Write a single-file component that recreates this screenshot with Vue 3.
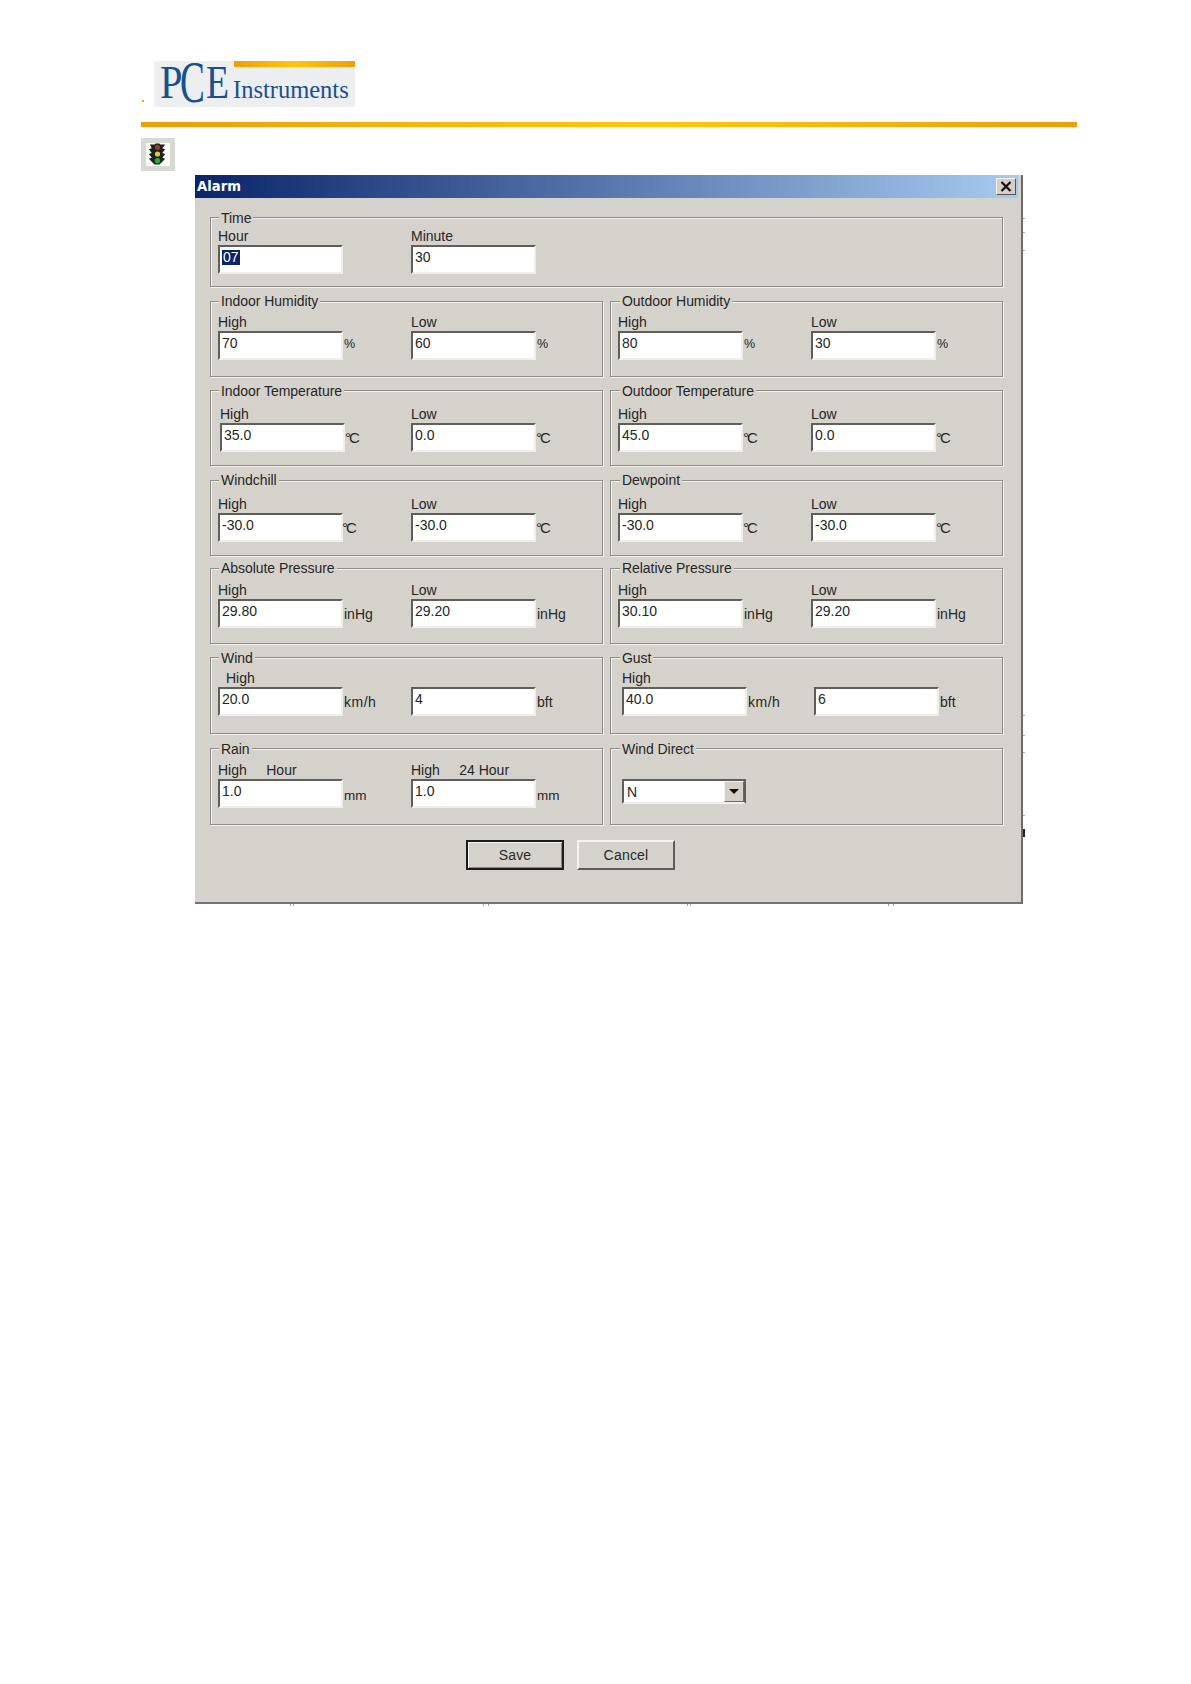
<script setup>
const rows = [
  { cls: 'r0', groups: [
    { title: 'Time', cls: 'wide', fields: [
      { label: 'Hour', value: '07', selected: true },
      { label: 'Minute', value: '30' }
    ] }
  ] },
  { cls: 'r1', groups: [
    { title: 'Indoor Humidity', fields: [
      { label: 'High', value: '70', unit: '%', unitCls: 'pct' },
      { label: 'Low', value: '60', unit: '%', unitCls: 'pct' }
    ] },
    { title: 'Outdoor Humidity', fields: [
      { label: 'High', value: '80', unit: '%', unitCls: 'pct' },
      { label: 'Low', value: '30', unit: '%', unitCls: 'pct' }
    ] }
  ] },
  { cls: 'r2', groups: [
    { title: 'Indoor Temperature', cls: 'inset2', fields: [
      { label: 'High', value: '35.0', unit: '°C', unitCls: 'deg' },
      { label: 'Low', value: '0.0', unit: '°C', unitCls: 'deg' }
    ] },
    { title: 'Outdoor Temperature', fields: [
      { label: 'High', value: '45.0', unit: '°C', unitCls: 'deg' },
      { label: 'Low', value: '0.0', unit: '°C', unitCls: 'deg' }
    ] }
  ] },
  { cls: 'r3', groups: [
    { title: 'Windchill', fields: [
      { label: 'High', value: '-30.0', unit: '°C', unitCls: 'deg tight' },
      { label: 'Low', value: '-30.0', unit: '°C', unitCls: 'deg' }
    ] },
    { title: 'Dewpoint', fields: [
      { label: 'High', value: '-30.0', unit: '°C', unitCls: 'deg' },
      { label: 'Low', value: '-30.0', unit: '°C', unitCls: 'deg' }
    ] }
  ] },
  { cls: 'r4', groups: [
    { title: 'Absolute Pressure', fields: [
      { label: 'High', value: '29.80', unit: 'inHg' },
      { label: 'Low', value: '29.20', unit: 'inHg' }
    ] },
    { title: 'Relative Pressure', fields: [
      { label: 'High', value: '30.10', unit: 'inHg' },
      { label: 'Low', value: '29.20', unit: 'inHg' }
    ] }
  ] },
  { cls: 'r5', groups: [
    { title: 'Wind', fields: [
      { label: 'High', labelCls: 'indent', value: '20.0', unit: 'km/h', unitCls: 'wide-unit' },
      { label: '', value: '4', unit: 'bft' }
    ] },
    { title: 'Gust', cls: 'inset4', fields: [
      { label: 'High', value: '40.0', unit: 'km/h', unitCls: 'wide-unit' },
      { label: '', value: '6', unit: 'bft' }
    ] }
  ] },
  { cls: 'r6', groups: [
    { title: 'Rain', fields: [
      { label: 'High     Hour', value: '1.0', unit: 'mm', unitCls: 'low' },
      { label: 'High     24 Hour', value: '1.0', unit: 'mm', unitCls: 'low' }
    ] },
    { title: 'Wind Direct', cls: 'inset4', fields: [
      { label: '', value: 'N', select: true }
    ] }
  ] }
]

// Scan artefacts: hairline ticks just outside the dialog frame
const bottomTicks = [95, 98, 288, 293, 492, 495, 693, 698]
const sideTicks = [43, 57, 75, 540, 560, 577, 640]
</script>

<template>
  <div class="page">
    <div class="logo">
      <span class="logo-stripe"></span>
      <span class="logo-p">P</span><span class="logo-c">C</span><span class="logo-e">E</span><span class="logo-name">Instruments</span>
    </div>
    <span class="speck"></span>
    <div class="rule"></div>

    <div class="tool-icon">
      <svg width="24" height="25" viewBox="0 0 24 25">
        <path d="M4 2h5l1-1h4l1 1h5l-3 4 3 1-3 4 3 1-3 4 3 1-4 4-2 2H9l-2-2-4-4 3-1-3-4 3-1-3-4 3-1z" fill="#1d231c" />
        <circle cx="12" cy="5" r="2.7" fill="#a8352c" />
        <circle cx="12" cy="12" r="2.7" fill="#d8d23c" />
        <circle cx="12" cy="19" r="2.8" fill="#2fa845" />
      </svg>
    </div>

    <div class="dialog">
      <div class="titlebar">
        <span class="title">Alarm</span>
        <button class="close" type="button" aria-label="Close">
          <svg width="12" height="11" viewBox="0 0 12 11">
            <path d="M1.5 1 L10.5 10 M10.5 1 L1.5 10" stroke="#111" stroke-width="2.2" fill="none" />
          </svg>
        </button>
      </div>

      <div class="body">
        <div v-for="row in rows" :key="row.cls" class="row" :class="row.cls">
          <section v-for="g in row.groups" :key="g.title" class="group" :class="g.cls">
            <span class="legend">{{ g.title }}</span>
            <div v-for="(f, i) in g.fields" :key="i" class="field">
              <span class="label" :class="f.labelCls">{{ f.label }}</span>
              <div class="line">
                <div v-if="f.select" class="select">
                  <span class="select-value">{{ f.value }}</span>
                  <span class="select-btn"><span class="arrow"></span></span>
                </div>
                <div v-else class="box">
                  <span :class="{ selected: f.selected }">{{ f.value }}</span>
                </div>
                <span v-if="f.unit" class="unit" :class="f.unitCls">{{ f.unit }}</span>
              </div>
            </div>
          </section>
        </div>

        <div class="actions">
          <button class="btn default" type="button">Save</button>
          <button class="btn" type="button">Cancel</button>
        </div>
      </div>
      <span class="blot"></span>
      <span v-for="x in bottomTicks" :key="'b' + x" class="tick-b" :style="{ left: x + 'px' }"></span>
      <span v-for="y in sideTicks" :key="'s' + y" class="tick-s" :style="{ top: y + 'px' }"></span>
    </div>
  </div>
</template>

<style scoped>
.page {
  position: relative;
  width: 1191px;
  min-height: 1684px;
  padding-top: 61px;
  box-sizing: border-box;
  background: #fff;
  font-family: "Liberation Sans", Arial, sans-serif;
  font-size: 14px;
  color: #262626;
  overflow: hidden;
}

/* Logo */
.logo {
  position: relative;
  display: flex;
  align-items: baseline;
  width: 201px;
  height: 46px;
  margin-left: 154px;
  background: #eceef0;
  color: #17508f;
  font-family: "Liberation Serif", "Times New Roman", serif;
  line-height: 46px;
  box-sizing: border-box;
  padding-left: 6px;
}
.logo-stripe {
  position: absolute;
  top: 0;
  right: 0;
  width: 121px;
  height: 6px;
  background: linear-gradient(90deg, #ee9e0a, #fdc70c 50%, #ee9e0a);
}
.logo-p, .logo-c, .logo-e {
  display: inline-block;
  transform-origin: left bottom;
}
.logo-p {
  width: 20px;
  font-size: 46px;
  transform: translateY(-6px) scaleX(0.88);
}
.logo-c {
  width: 26px;
  font-size: 60px;
  transform: translateY(-2px) scaleX(0.62);
}
.logo-e {
  width: 27px;
  font-size: 46px;
  transform: translateY(-6px) scaleX(0.82);
}
.logo-name {
  font-size: 24.5px;
  transform: translateY(-6px);
}
.speck {
  position: absolute;
  left: 142px;
  top: 100px;
  width: 2px;
  height: 2px;
  background: #f2a900;
}
.rule {
  width: 936px;
  height: 5px;
  margin: 15px 0 0 141px;
  background: linear-gradient(90deg, #ee9d0c, #fdc90c 55%, #ee9d0c);
}

/* Toolbar icon */
.tool-icon {
  display: flex;
  align-items: center;
  justify-content: center;
  width: 34px;
  height: 33px;
  margin: 11px 0 0 141px;
  padding-right: 1px;
  box-sizing: border-box;
  border: 5px solid #d8d8d5;
  background: #fbfbf5;
}

/* Dialog */
.dialog {
  position: relative;
  width: 828px;
  height: 729px;
  margin: 4px 0 0 195px;
  box-sizing: border-box;
  background: #d5d2cc;
  border-right: 2px solid #6b6b69;
  border-bottom: 2px solid #737371;
}
.titlebar {
  display: flex;
  align-items: center;
  justify-content: space-between;
  height: 23px;
  margin-right: 3px;
  padding: 0 2px;
  background: linear-gradient(90deg, #0a246a, #a6caf0);
}
.title {
  font-family: "DejaVu Sans", Verdana, sans-serif;
  font-weight: 700;
  font-size: 13.2px;
  color: #fff;
}
.close {
  display: flex;
  align-items: center;
  justify-content: center;
  width: 20px;
  height: 17px;
  padding: 0;
  background: #d4d0c8;
  border: 1px solid;
  border-color: #f6f5f2 #55544f #55544f #f6f5f2;
}
.body {
  padding: 19px 0 0 15px;
}
.row {
  display: flex;
  gap: 7px;
}
.r0 { height: 70px; }
.r1 { height: 76px; margin-top: 14px; }
.r2 { height: 76px; margin-top: 13px; }
.r3 { height: 76px; margin-top: 14px; }
.r4 { height: 76px; margin-top: 12px; }
.r5 { height: 77px; margin-top: 13px; }
.r6 { height: 77px; margin-top: 14px; }

.group {
  position: relative;
  display: grid;
  grid-template-columns: 193px 1fr;
  align-content: start;
  width: 393px;
  box-sizing: border-box;
  padding-left: 7px;
  border: 1px solid #8e8d89;
  box-shadow: inset 1px 1px 0 #f1f0ec, 1px 1px 0 #f1f0ec;
}
.group.wide { width: 793px; }
.group.inset2 { padding-left: 9px; grid-template-columns: 191px 1fr; }
.group.inset4 { padding-left: 11px; grid-template-columns: 192px 1fr; }
.r0 .group { padding-top: 11px; }
.r1 .group { padding-top: 13px; }
.r2 .group { padding-top: 16px; }
.r3 .group { padding-top: 16px; }
.r4 .group { padding-top: 14px; }
.r5 .group { padding-top: 13px; }
.r6 .group { padding-top: 14px; }

.legend {
  position: absolute;
  top: -9px;
  left: 9px;
  padding: 0 2px;
  line-height: 16px;
  letter-spacing: -0.05px;
  background: #d5d2cc;
}
.group:first-child .legend {
  left: 8px;
}
.r0 .legend, .r2 .legend, .r5 .legend, .r6 .legend {
  top: -8px;
}
.field {
  min-width: 0;
}
.label {
  display: block;
  height: 16px;
  line-height: 14px;
  white-space: pre;
}
.label.indent { padding-left: 8px; }
.line {
  display: flex;
  align-items: center;
}
.box {
  width: 125px;
  height: 29px;
  box-sizing: border-box;
  padding: 1px 0 0 2px;
  line-height: 19px;
  background: #fff;
  border: 2px solid;
  border-color: #5e5e5b #efeeea #efeeea #5e5e5b;
}
.selected {
  display: inline-block;
  padding: 0 1px;
  line-height: 15px;
  background: #0a246a;
  color: #fff;
}
.unit {
  margin-left: 1px;
  padding-top: 1px;
}
.unit.wide-unit { letter-spacing: 0.5px; }
.unit.pct {
  font-size: 12.5px;
  margin-left: 1px;
  padding: 0 0 4px;
  color: #1e1e1e;
}
.unit.deg {
  letter-spacing: -2px;
  font-size: 15px;
  margin-left: 0;
  padding: 0;
}
.unit.tight { margin-left: -1px; }
.unit.low { padding-top: 3px; font-size: 13.5px; }

.select {
  display: flex;
  width: 124px;
  height: 25px;
  box-sizing: border-box;
  background: #fff;
  border: 2px solid;
  border-color: #5e5e5b #5e5e5b #efeeea #5e5e5b;
}
.select-value {
  flex: 1;
  padding: 2px 0 0 3px;
  line-height: 19px;
}
.select-btn {
  display: flex;
  align-items: center;
  justify-content: center;
  width: 20px;
  box-sizing: border-box;
  background: #d4d0c8;
  border: 1px solid;
  border-color: #f2f1ed #6a6966 #6a6966 #f2f1ed;
}
.arrow {
  width: 0;
  height: 0;
  border-left: 5px solid transparent;
  border-right: 5px solid transparent;
  border-top: 5px solid #111;
}

.actions {
  display: flex;
  gap: 13px;
  margin: 15px 0 0 256px;
}
.btn {
  width: 98px;
  height: 30px;
  padding: 0;
  box-sizing: border-box;
  background: #d5d2cc;
  font: inherit;
  color: #2a2a2a;
  letter-spacing: 0.2px;
  border: 2px solid;
  border-color: #f4f3ef #5c5b58 #5c5b58 #f4f3ef;
}
.btn.default {
  border-color: #1c1c1c;
  box-shadow: inset 1px 1px 0 #f4f3ef, inset -1px -1px 0 #8a8985;
}
.blot {
  position: absolute;
  left: 828px;
  top: 654px;
  width: 2px;
  height: 8px;
  background: #222;
}
.tick-b {
  position: absolute;
  bottom: -4px;
  width: 1px;
  height: 2px;
  background: #a5a5a3;
}
.tick-s {
  position: absolute;
  left: 828px;
  width: 2px;
  height: 1px;
  background: #a5a5a3;
}
</style>
